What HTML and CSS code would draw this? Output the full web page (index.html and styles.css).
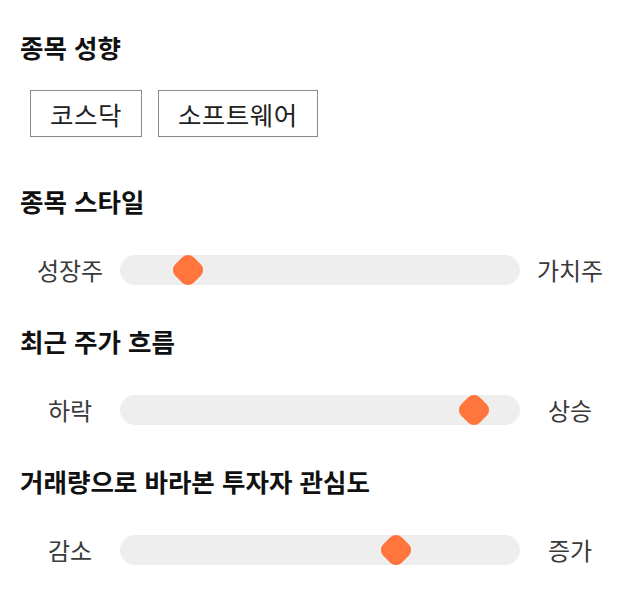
FILE: index.html
```html
<!DOCTYPE html>
<html lang="ko">
<head>
<meta charset="utf-8">
<link rel="stylesheet" href="styles.css">
</head>
<body>
<main class="page">
  <section class="section section-tags">
    <h2 class="title">종목 성향</h2>
    <div class="tags">
      <span class="tag">코스닥</span>
      <span class="tag">소프트웨어</span>
    </div>
  </section>
  <section class="section">
    <h2 class="title">종목 스타일</h2>
    <div class="range">
      <span class="label">성장주</span>
      <div class="track"><span class="thumb" style="left:17%"></span></div>
      <span class="label">가치주</span>
    </div>
  </section>
  <section class="section">
    <h2 class="title">최근 주가 흐름</h2>
    <div class="range">
      <span class="label">하락</span>
      <div class="track"><span class="thumb" style="left:88.5%"></span></div>
      <span class="label">상승</span>
    </div>
  </section>
  <section class="section">
    <h2 class="title">거래량으로 바라본 투자자 관심도</h2>
    <div class="range">
      <span class="label">감소</span>
      <div class="track"><span class="thumb" style="left:69%"></span></div>
      <span class="label">증가</span>
    </div>
  </section>
</main>
</body>
</html>
```
FILE: styles.css
```css
* { box-sizing: border-box; }
html, body { margin: 0; padding: 0; background: #fff; }
body {
  font-family: "Noto Sans CJK KR", "Noto Sans", sans-serif;
  color: #111;
}
.page {
  padding: 32px 20px 0;
  display: flex;
  flex-direction: column;
  gap: 41px;
}
.section {
  display: flex;
  flex-direction: column;
  gap: 39px;
}
.section-tags {
  gap: 28px;
  padding-bottom: 8px;
}
.title {
  margin: 0;
  font-size: 25.5px;
  line-height: 30px;
  font-weight: 700;
  color: #111;
}
.tags {
  display: flex;
  gap: 16px;
  padding-left: 10px;
}
.tag {
  display: flex;
  align-items: center;
  justify-content: center;
  height: 47px;
  padding: 0 19px;
  border: 1px solid #8a8a8a;
  font-size: 25.5px;
  letter-spacing: 0.5px;
  color: #222;
}
.range {
  display: flex;
  align-items: center;
  height: 30px;
}
.label {
  width: 100px;
  text-align: center;
  font-size: 24px;
  color: #3a3a3a;
  line-height: 30px;
}
.track {
  position: relative;
  width: 400px;
  height: 30px;
  border-radius: 15px;
  background: #eeeeee;
}
.thumb {
  position: absolute;
  top: 50%;
  width: 26px;
  height: 26px;
  margin: -13px 0 0 -13px;
  border-radius: 8px;
  background: #ff753b;
  transform: rotate(45deg);
}
```
